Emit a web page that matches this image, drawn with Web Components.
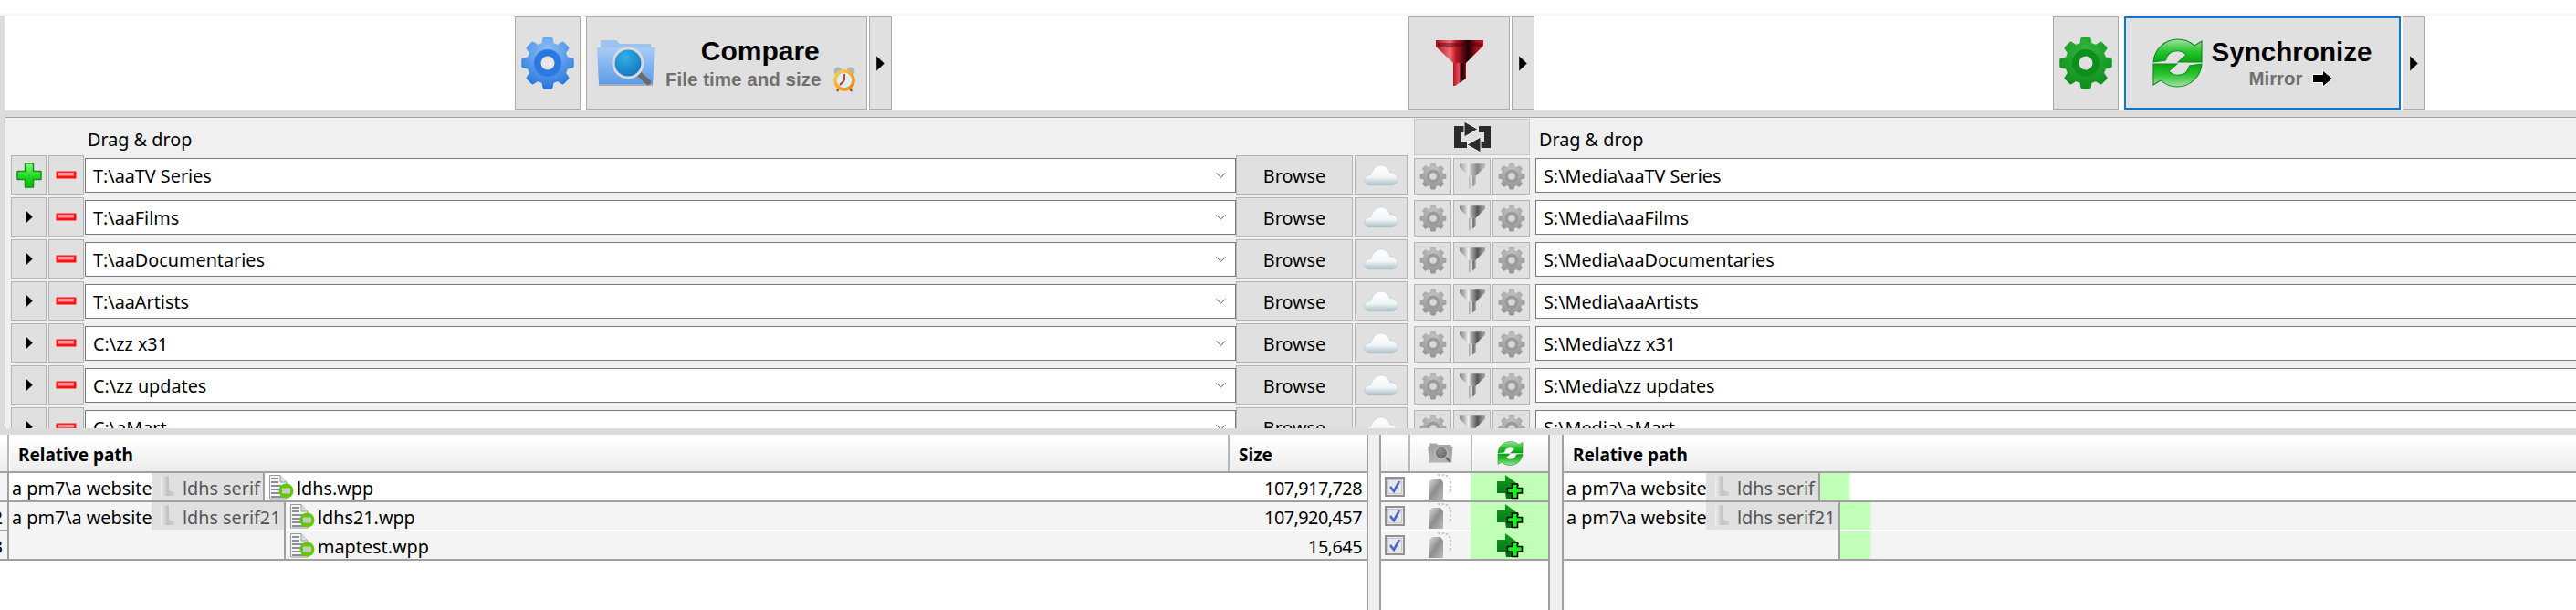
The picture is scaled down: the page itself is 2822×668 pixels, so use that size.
<!DOCTYPE html>
<html lang="en"><head><meta charset="utf-8"><title>FreeFileSync</title>
<style>
html,body{margin:0;padding:0;background:#fff;overflow:hidden}
body{font-family:"Noto Sans",sans-serif;font-size:19.8px;color:#000}
</style></head>
<body>
<ff-app></ff-app>
<script>
function gearPath(c,ro,rr,n){let d='';const t=2*Math.PI/n;for(let i=0;i<n;i++){const a=i*t-Math.PI/2;const p=[[a-t*.29,rr],[a-t*.17,ro],[a+t*.17,ro],[a+t*.29,rr]];p.forEach((q,k)=>{d+=(i==0&&k==0?'M':'L')+(c+q[1]*Math.cos(q[0])).toFixed(2)+' '+(c+q[1]*Math.sin(q[0])).toFixed(2)+' '});}return d+'Z';}
const gear=(a,b,ring,hole)=>`<svg viewBox="0 0 60 60"><defs><radialGradient id="g" cx=".5" cy=".25" r=".85"><stop offset="0" stop-color="${a}"/><stop offset="1" stop-color="${b}"/></radialGradient></defs>
<path d="${gearPath(30,27,21,8)}" fill="url(#g)" stroke="url(#g)" stroke-width="4" stroke-linejoin="round"/><circle cx="30" cy="30" r="15" fill="${ring}"/><circle cx="30" cy="30" r="7.500" fill="${hole}"/></svg>`;
const syncShape='M0 26C1 12 11 1 24 1C31 1 36 4 40 8L47 3V26H24L32 18C29 15 26 13 22 14C16 14 13 19 12 24Z';
const syncIcon=`<svg viewBox="0 0 47 54" preserveAspectRatio="none"><defs><linearGradient id="g" x1="0" y1="0" x2="0" y2="1"><stop offset="0" stop-color="#a5dfa5"/><stop offset=".55" stop-color="#25c52a"/><stop offset="1" stop-color="#0aa514"/></linearGradient></defs>
<path d="${syncShape}" fill="url(#g)" stroke="#0d8a1c" stroke-width="1"/><path d="${syncShape}" fill="url(#g)" stroke="#0d8a1c" stroke-width="1" transform="rotate(180 23.5 27)"/></svg>`;
const folder=(a,b,tab,lensA,lensB,rim,handle)=>`<svg viewBox="0 0 66 54"><defs><linearGradient id="f" x1="0" y1="0" x2="0" y2="1"><stop offset="0" stop-color="${a}"/><stop offset="1" stop-color="${b}"/></linearGradient><radialGradient id="l" cx=".4" cy=".3" r=".8"><stop offset="0" stop-color="${lensA}"/><stop offset="1" stop-color="${lensB}"/></radialGradient></defs>
<path d="M5 2H22L26 6H60V14H5Z" fill="${tab}"/><path d="M1 10H65L62 50H3Z" fill="url(#f)"/><path d="M3 50H62V52H3Z" fill="#7f8a98" opacity=".6"/>
<path d="M44 36L57 48" stroke="${handle}" stroke-width="6" stroke-linecap="round"/><circle cx="35" cy="27" r="16" fill="url(#l)" stroke="${rim}" stroke-width="3"/></svg>`;
const ICONS={
 gearBlue:()=>gear('#8fc2f5','#1f6fdc','#2a79df','#e6e6e6'),
 gearGreen:()=>gear('#33b53d','#0a8a1a','#0d8f1e','#e0e0e0'),
 gearGrey:()=>gear('#c4c4c4','#8e8e8e','#9a9a9a','#d8d8d8'),
 folderBlue:()=>folder('#a8cdf5','#5d9ae8','#9dc2ee','#35aee0','#0d6fc0','#dadada','#6a6a6a'),
 folderGrey:()=>folder('#a2a2a2','#b4b4b4','#a8a8a8','#909090','#626262','#bcbcbc','#666'),
 clock:()=>`<svg viewBox="0 0 24 28"><defs><linearGradient id="o" x1="0" y1="0" x2="1" y2="1"><stop offset="0" stop-color="#ffd24a"/><stop offset="1" stop-color="#e8840c"/></linearGradient></defs><circle cx="5" cy="5" r="4.500" fill="#aeb8bc"/><circle cx="19" cy="5" r="4.500" fill="#aeb8bc"/><path d="M4 27L7 22M20 27L17 22" stroke="#8a5a10" stroke-width="2.400"/><circle cx="12" cy="15" r="10" fill="#d9f0fa" stroke="url(#o)" stroke-width="3.600"/><path d="M12 15L12 8M12 15L7 20" stroke="#d8261c" stroke-width="1.800"/></svg>`,
 funnel:()=>`<svg viewBox="0 0 52 51"><defs><linearGradient id="r" x1="0" y1="0" x2="1" y2="0"><stop offset="0" stop-color="#a8101c"/><stop offset=".3" stop-color="#f0707a"/><stop offset=".42" stop-color="#c01824"/><stop offset=".68" stop-color="#1a0003"/><stop offset=".85" stop-color="#a0101c"/><stop offset="1" stop-color="#c81824"/></linearGradient><linearGradient id="s" x1="0" y1="0" x2="1" y2="0"><stop offset="0" stop-color="#b01420"/><stop offset=".45" stop-color="#e85060"/><stop offset=".6" stop-color="#300005"/><stop offset=".8" stop-color="#300005"/><stop offset="1" stop-color="#b01420"/></linearGradient></defs>
<path d="M0 0H52V6L33 25H19L0 7Z" fill="url(#r)"/><path d="M2 3H50V7H2Z" fill="#40000a" opacity=".45"/><path d="M19 25H33V42L21 50H19Z" fill="url(#s)"/></svg>`,
 funnelGrey:()=>`<svg viewBox="0 0 52 51"><defs><linearGradient id="r" x1="0" y1="0" x2="1" y2="0"><stop offset="0" stop-color="#858585"/><stop offset=".18" stop-color="#b4b4b4"/><stop offset=".34" stop-color="#f0f0f0"/><stop offset=".48" stop-color="#a0a0a0"/><stop offset=".7" stop-color="#555"/><stop offset=".86" stop-color="#8a8a8a"/><stop offset="1" stop-color="#a4a4a4"/></linearGradient><linearGradient id="s" x1="0" y1="0" x2="1" y2="0"><stop offset="0" stop-color="#9a9a9a"/><stop offset=".4" stop-color="#eee"/><stop offset=".6" stop-color="#6a6a6a"/><stop offset="1" stop-color="#a0a0a0"/></linearGradient></defs>
<path d="M0 0H52V6L33 25H19L0 7Z" fill="url(#r)"/><path d="M19 25H33V42L21 50H19Z" fill="url(#s)"/></svg>`,
 tri:()=>`<svg viewBox="0 0 11 19"><path d="M1 1L10 9.500L1 18Z" fill="#000" stroke="#fff" stroke-width=".6" stroke-opacity=".6"/></svg>`,
 mirrorArrow:()=>`<svg viewBox="0 0 24 20"><path d="M1 5.500H12V1L23 10L12 19V14.500H1Z" fill="#000" stroke="#fff" stroke-width="1"/></svg>`,
 plus:()=>`<svg viewBox="0 0 28 28"><defs><linearGradient id="g" x1="0" y1="0" x2="0" y2="1"><stop offset="0" stop-color="#8cf58a"/><stop offset=".55" stop-color="#1fd820"/><stop offset="1" stop-color="#0cb80c"/></linearGradient></defs><path d="M9.500 1H18.500V9.500H27V18.500H18.500V27H9.500V18.500H1V9.500H9.500Z" fill="url(#g)" stroke="#0c9a10" stroke-width="1.500" stroke-linejoin="round"/></svg>`,
 minus:()=>`<svg viewBox="0 0 23 9"><rect x=".5" y=".5" width="22" height="8" fill="#ff1010"/><rect x="3" y="2" width="17" height="3.500" fill="#ff9098"/><rect x="1" y="1" width="21" height="1" fill="#ff2020"/></svg>`,
 cloud:()=>`<svg viewBox="0 0 40 26"><defs><linearGradient id="c" x1="0" y1="0" x2="0" y2="1"><stop offset="0" stop-color="#fff"/><stop offset=".6" stop-color="#f2f6f8"/><stop offset="1" stop-color="#a8bcc2"/></linearGradient></defs><path d="M7 25C2 25 0 21 1 18C2 14 6 13 8 13C10 7 14 2 20 2C26 2 29 6 30 10C36 10 39 14 39 18C39 22 36 25 32 25Z" fill="url(#c)" stroke="#b8c8cc" stroke-width=".6"/></svg>`,
 swap:()=>`<svg viewBox="0 0 40 34"><g fill="none" stroke="#2b2b2b" stroke-width="7"><path d="M14 25.500H3.500V8.500H12"/><path d="M27 8.500H36.500V25.500H28"/></g><path d="M11 0L26 8.500L11 17Z" fill="#2b2b2b" stroke="#f4f4f4" stroke-width="1"/><path d="M29 34L14 25.500L29 17Z" fill="#2b2b2b" stroke="#f4f4f4" stroke-width="1"/></svg>`,
 chev:()=>`<svg viewBox="0 0 11 6"><path d="M.5 .5L5.500 5L10.500 .5" fill="none" stroke="#505050" stroke-width="1"/></svg>`,
 file:()=>`<svg viewBox="0 0 27 27"><path d="M.5 .5H12L19 8V26H.5Z" fill="#f4f4f4" stroke="#9a9a9a"/><path d="M12 .5V8H19" fill="#ddd" stroke="#9a9a9a"/><g stroke="#8a8f98" stroke-width="2"><path d="M2 4H10M2 8H10M2 12H16M2 16H13M2 20H13M2 24H16"/></g><circle cx="18.500" cy="17.500" r="8" fill="#62c800"/><rect x="14" y="14.500" width="9" height="6" fill="#c8c8c8"/></svg>`,
 gfolder:()=>`<svg viewBox="0 0 17 25"><defs><linearGradient id="g" x1="0" y1="0" x2="1" y2="0"><stop offset="0" stop-color="#f0f0f0"/><stop offset=".5" stop-color="#c2c2c2"/><stop offset="1" stop-color="#d0d0d0"/></linearGradient></defs><path d="M2 1L11 0V16L17 18V22H6L2 25Z" fill="url(#g)"/></svg>`,
 docs:()=>`<svg viewBox="0 0 26 28"><defs><linearGradient id="g" x1="0" y1="0" x2="1" y2="1"><stop offset="0" stop-color="#e0e0e0"/><stop offset=".5" stop-color="#8e8e8e"/><stop offset="1" stop-color="#bcbcbc"/></linearGradient></defs><path d="M11 1H20L25 6V20H23" fill="none" stroke="#bcbcbc" stroke-width="1.700" stroke-dasharray="2.500 2"/><path d="M1 9L5 5H14L17 9V28H1Z" fill="url(#g)"/></svg>`,
 createRight:()=>`<svg viewBox="0 0 28 26"><defs><linearGradient id="g" x1="0" y1="0" x2="0" y2="1"><stop offset="0" stop-color="#0ca01e"/><stop offset="1" stop-color="#046a12"/></linearGradient></defs><path d="M0 7H9V0L24 11L16 26H10L9 20H0Z" fill="url(#g)"/><path d="M16.500 10H22.500V14.500H27.500V20H22.500V25.500H16.500V20H11.500V14.500H16.500Z" fill="#18f018" stroke="#000" stroke-width="1.600"/></svg>`,
 check:()=>`<svg viewBox="0 0 22 22"><rect x="1" y="1" width="20" height="20" fill="#e4e6f0" stroke="#929292" stroke-width="2"/><rect x="3.500" y="3.500" width="15" height="15" fill="none" stroke="#c8c8c8" stroke-width="1"/><path d="M6 11L10 16L16 5" fill="none" stroke="#4664b8" stroke-width="2.600"/></svg>`,
 sync:()=>syncIcon
};
class FFIcon extends HTMLElement{
 connectedCallback(){ if(this.shadowRoot) return; const r=this.attachShadow({mode:'open'});
  const w=this.getAttribute('w'),h=this.getAttribute('h');
  r.innerHTML=`<style>:host{display:block;flex:none;width:${w}px;height:${h}px}svg{display:block;width:100%;height:100%;overflow:visible}</style>`+ICONS[this.getAttribute('name')]();}
}
class FFToolButton extends HTMLElement{
 connectedCallback(){ if(this.shadowRoot) return; const r=this.attachShadow({mode:'open'});
  r.innerHTML=`<style>:host{display:flex;flex:none;box-sizing:border-box;height:102px;margin-top:1px;background:#e0e0e0;border:1px solid #ababab;align-items:center;justify-content:center;font-family:"Liberation Sans",sans-serif}
  :host([focused]){border:2px solid #0a78d2}</style><slot></slot>`;}
}
class FFToolbar extends HTMLElement{
 connectedCallback(){ if(this.shadowRoot) return; const r=this.attachShadow({mode:'open'});
  r.innerHTML=`<style>:host{display:flex;height:104px;background:#fff;flex:1}
  .row{display:flex;align-items:flex-start}
  .a{margin-left:559px}.b{margin-left:566px}.c{margin-left:568px}
  .compare{width:308px;justify-content:flex-start;padding:0}
  .t1{font-weight:700;font-size:30px;line-height:34px;text-align:center;color:#000}
  .t2{font-weight:700;font-size:20.600px;line-height:24px;color:#707070;white-space:nowrap}
  .cbody{display:flex;align-items:center;margin-left:10px}
  .col{margin-left:10px;display:flex;flex-direction:column;margin-top:2px}
  .sub{display:flex;align-items:center;gap:13px}
  .sbody{display:flex;align-items:center}
  .t3{font-weight:700;font-size:29.600px;line-height:34px;text-align:center;color:#000;white-space:nowrap}
  .t4{font-weight:700;font-size:20.400px;line-height:24px;color:#707070}
  .ctr{display:flex;justify-content:center;align-items:center;gap:10px}
  </style>
  <div class="row a">
   <ff-tool-button style="width:72px"><ff-icon name="gearBlue" w="60" h="60"></ff-icon></ff-tool-button>
   <ff-tool-button class="compare" style="margin-left:6px"><div class="cbody"><ff-icon name="folderBlue" w="66" h="54"></ff-icon><div class="col"><div class="t1">Compare</div><div class="sub"><span class="t2">File time and size</span><ff-icon name="clock" w="24" h="28"></ff-icon></div></div></div></ff-tool-button>
   <ff-tool-button style="width:25px;margin-left:2px"><ff-icon name="tri" w="11" h="19"></ff-icon></ff-tool-button>
  </div>
  <div class="row b">
   <ff-tool-button style="width:111px"><ff-icon name="funnel" w="52" h="51"></ff-icon></ff-tool-button>
   <ff-tool-button style="width:25px;margin-left:2px"><ff-icon name="tri" w="11" h="19"></ff-icon></ff-tool-button>
  </div>
  <div class="row c">
   <ff-tool-button style="width:72px"><ff-icon name="gearGreen" w="60" h="60"></ff-icon></ff-tool-button>
   <ff-tool-button focused style="width:303px;margin-left:6px"><div class="sbody"><ff-icon name="sync" w="53" h="54"></ff-icon><div style="margin-left:11px"><div class="t3">Synchronize</div><div class="ctr"><span class="t4">Mirror</span><ff-icon name="mirrorArrow" w="25" h="20"></ff-icon></div></div></div></ff-tool-button>
   <ff-tool-button style="width:25px;margin-left:2px"><ff-icon name="tri" w="11" h="19"></ff-icon></ff-tool-button>
  </div>`;}
}
class FFMini extends HTMLElement{
 connectedCallback(){ if(this.shadowRoot) return; const r=this.attachShadow({mode:'open'});
  r.innerHTML=`<style>:host{display:flex;flex:none;box-sizing:border-box;background:#e0e0e0;border:1px solid #b4b4b4;align-items:center;justify-content:center;height:43px}
  :host([low]){height:40px;margin-top:3px}</style><slot></slot>`;}
}
class FFPathBox extends HTMLElement{
 connectedCallback(){ if(this.shadowRoot) return; const r=this.attachShadow({mode:'open'});
  const chev=this.hasAttribute('chev');
  r.innerHTML=`<style>:host{display:flex;flex:none;box-sizing:border-box;height:38px;margin-top:3px;background:#fff;border:1px solid #7a7a7a;align-items:center;padding:0 10px 0 8px;justify-content:space-between;white-space:nowrap}
  </style><span><slot></slot></span>${chev?'<ff-icon name="chev" w="11" h="6"></ff-icon>':''}`;}
}
class FFFolderRow extends HTMLElement{
 connectedCallback(){ if(this.shadowRoot) return; const r=this.attachShadow({mode:'open'});
  const first=this.hasAttribute('first');
  r.innerHTML=`<style>:host{display:flex;height:46px;align-items:flex-start}
  </style>
  <ff-mini style="width:39px">${first?'<ff-icon name="plus" w="28" h="28"></ff-icon>':'<ff-icon name="tri" w="10" h="17"></ff-icon>'}</ff-mini>
  <ff-mini style="width:39px;margin-left:2px"><ff-icon name="minus" w="23" h="9"></ff-icon></ff-mini>
  <ff-path-box chev style="width:1261px;margin-left:1px">${this.getAttribute('left')}</ff-path-box>
  <ff-mini style="width:128px;padding-top:2px">Browse</ff-mini>
  <ff-mini style="width:58px;margin-left:2px"><ff-icon name="cloud" w="38" h="25"></ff-icon></ff-mini>
  <ff-mini low style="width:41px;margin-left:7px"><ff-icon name="gearGrey" w="30" h="30"></ff-icon></ff-mini>
  <ff-mini low style="width:41px;margin-left:2px"><ff-icon name="funnelGrey" w="28" h="28" style="${first?'opacity:.65':''}"></ff-icon></ff-mini>
  <ff-mini low style="width:41px;margin-left:2px"><ff-icon name="gearGrey" w="30" h="30"></ff-icon></ff-mini>
  <ff-path-box style="width:1146px;margin-left:6px">${this.getAttribute('right')}</ff-path-box>`;}
}
class FFFolderPanel extends HTMLElement{
 connectedCallback(){ if(this.shadowRoot) return; const r=this.attachShadow({mode:'open'});
  const L=['T:\\aaTV Series','T:\\aaFilms','T:\\aaDocumentaries','T:\\aaArtists','C:\\zz x31','C:\\zz updates','C:\\aMart'];
  const R=['aaTV Series','aaFilms','aaDocumentaries','aaArtists','zz x31','zz updates','aMart'].map(s=>'S:\\Media\\'+s);
  const rows=L.map((l,i)=>`<ff-folder-row ${i==0?'first':''} left="${l}" right="${R[i]}"></ff-folder-row>`).join('');
  r.innerHTML=`<style>:host{display:block;box-sizing:border-box;flex:1;height:341px;background:#f0f0f0;border-left:1px solid #a4a4a4;border-top:1px solid #a4a4a4;padding-left:6px;overflow:hidden}
  .head{display:flex;height:41px;align-items:center}
  .lbl{margin-left:84px;width:1453px;padding-top:6px}
  .lbl2{margin-left:10px;white-space:nowrap;padding-top:6px}
  .sw{box-sizing:border-box;flex:none;width:127px;height:40px;background:#e0e0e0;display:flex;align-items:center;justify-content:center;margin-top:1px;border:1px solid #c8c8c8}
  </style>
  <div class="head"><span class="lbl">Drag &amp; drop</span><div class="sw"><ff-icon name="swap" w="40" h="34"></ff-icon></div><span class="lbl2">Drag &amp; drop</span></div>
  ${rows}`;}
}
class FFFileGrid extends HTMLElement{
 connectedCallback(){ if(this.shadowRoot) return; const r=this.attachShadow({mode:'open'});
  const side=this.getAttribute('side');
  const css=`<style>:host{display:block;min-width:0;overflow:hidden}
  .hd{display:flex;height:40px;background:linear-gradient(#fff 10%,#ededed);font-weight:700;font-size:19px;align-items:center}
  .hd>div{box-sizing:border-box;height:100%;display:flex;align-items:center}
  .tx{padding-top:4px}
  .sep{border-left:2px solid #b8b8b8;box-shadow:inset 1px 0 #fff}
  .line{height:2px;background:#a0a0a0}
  .alt{background:#f4f4f4}
  .group{display:flex;background:#fff}
  .n{width:8px;box-sizing:border-box;overflow:hidden;display:flex;justify-content:flex-end;padding-right:5px;height:30px;line-height:33px}
  .nn{border-right:2px solid #a0a0a0;flex:none;width:10px;box-sizing:border-box}
  .p{flex:none;box-sizing:border-box;padding-left:3px;border-right:2px solid #a0a0a0}
  .seg{display:flex;height:30px;line-height:33px;white-space:nowrap}
  .pre{flex:none;width:153px}
  .dir{background:#e0e0e0;color:#555;display:flex;align-items:center;flex:1;padding-left:8px;height:30px;box-sizing:border-box}
  .dir span{margin-left:9px;margin-top:3px;line-height:30px;height:30px}
  .rest{flex:1;min-width:0}
  .f{display:flex;height:30px;align-items:center;padding-left:5px;white-space:nowrap;justify-content:space-between;padding-right:5px}
  .f>div{display:flex;align-items:center;gap:3px}
  .f span{line-height:33px;height:30px}
  .f>span{letter-spacing:-.5px}
  .white{height:2px;background:#fff}
  .bar{height:30px;background:linear-gradient(90deg,#c2ffb8 0,#c2ffb8 calc(100% - 3px),transparent)}
  .mid{display:grid;grid-template-columns:30px 68px 85px;height:30px}
  .mid>div{display:flex;align-items:center;justify-content:center;overflow:hidden}
  .ok{background:#c2ffb8}
  </style>`;
  const dir=(t)=>`<div class="dir"><ff-icon name="gfolder" w="17" h="25"></ff-icon><span>${t}</span></div>`;
  const path=(t,w,alt)=>`<div class="p" style="width:${w}px;${alt?'height:62px;background:#f4f4f4':'height:30px;background:#fff'}"><div class="seg"><span class="pre">a pm7\\a website</span>${dir(t)}</div></div>`;
  const nums=(a)=>`<div class="nn" style="background:#f4f4f4">`+a.map((x,i)=>`<div class="n">${x}</div>${i<a.length-1?'<div style="height:2px;width:8px;background:#a0a0a0"></div>':''}`).join('')+`</div>`;
  if(side==='left'){
   const file=(n,s,alt)=>`<div class="f ${alt?'alt':''}"><div><ff-icon name="file" w="27" h="27"></ff-icon><span>${n}</span></div><span>${s}</span></div>`;
   r.innerHTML=css+`<div class="hd"><div style="width:8px"></div><div class="sep tx" style="width:1337px;padding-left:10px">Relative path</div><div class="sep tx" style="flex:1;padding-left:10px">Size</div></div><div class="line"></div>
   <div class="group">${nums([1])}${path('ldhs serif',280)}<div class="rest">${file('ldhs.wpp','107,917,728')}</div></div><div class="line"></div>
   <div class="group">${nums([2,3])}${path('ldhs serif21',303,1)}<div class="rest">${file('ldhs21.wpp','107,920,457',1)}<div class="white"></div>${file('maptest.wpp','15,645',1)}</div></div><div class="line"></div>`;
  } else if(side==='mid'){
   const row=(alt)=>`<div class="mid ${alt?'alt':''}"><div><ff-icon name="check" w="22" h="22"></ff-icon></div><div><ff-icon name="docs" w="26" h="28"></ff-icon></div><div class="ok"><ff-icon name="createRight" w="28" h="26"></ff-icon></div></div>`;
   r.innerHTML=css+`<div class="hd"><div style="width:30px"></div><div class="sep" style="width:68px;justify-content:center"><ff-icon name="folderGrey" w="28" h="24"></ff-icon></div><div class="sep" style="flex:1;justify-content:center"><ff-icon name="sync" w="27" h="27"></ff-icon></div></div><div class="line"></div>
   ${row()}<div class="line"></div>${row(1)}<div class="white" style="background:linear-gradient(90deg,#fff 98px,#c2ffb8 98px)"></div>${row(1)}<div class="line"></div>`;
  } else {
   const barRow=(w,alt)=>`<div class="${alt?'alt':''}" style="height:30px"><div class="bar" style="width:${w}px"></div></div>`;
   r.innerHTML=css+`<div class="hd"><div class="tx" style="padding-left:10px">Relative path</div></div><div class="line"></div>
   <div class="group">${path('ldhs serif',281)}<div class="rest">${barRow(34)}</div></div><div class="line"></div>
   <div class="group">${path('ldhs serif21',303,1)}<div class="rest">${barRow(35,1)}<div class="white"></div>${barRow(35,1)}</div></div><div class="line"></div>`;
  }
 }
}
class FFSash extends HTMLElement{
 connectedCallback(){ if(this.shadowRoot) return; const r=this.attachShadow({mode:'open'});
  r.innerHTML=`<style>:host{display:block;box-sizing:border-box;flex:none;background:#f0f0f0;border-left:2px solid #a0a0a0;border-right:2px solid #a0a0a0}</style>`;}
}
class FFApp extends HTMLElement{
 connectedCallback(){ if(this.shadowRoot) return; const r=this.attachShadow({mode:'open'});
  r.innerHTML=`<style>:host{display:block;width:2822px;height:668px;overflow:hidden;background:#fff}
  .top{height:15px}.hair{height:2px;background:#f3f3f3}
  .tb{display:flex;padding-left:5px;background:#dcdcdc;height:104px}
  .sa{height:7px;background:#dcdcdc}
  .pn{display:flex;padding-left:5px;background:#dcdcdc}
  .gr{display:flex;height:192px}
  </style>
  <div class="top"></div><div class="hair"></div>
  <div class="tb"><ff-toolbar></ff-toolbar></div>
  <div class="sa"></div>
  <div class="pn"><ff-folder-panel></ff-folder-panel></div>
  <div class="sa"></div>
  <div class="gr">
   <ff-file-grid side="left" style="width:1497px;flex:none"></ff-file-grid>
   <ff-sash style="width:16px"></ff-sash>
   <ff-file-grid side="mid" style="width:183px;flex:none"></ff-file-grid>
   <ff-sash style="width:17px"></ff-sash>
   <ff-file-grid side="right" style="flex:1"></ff-file-grid>
  </div>`;}
}
customElements.define('ff-icon',FFIcon);
customElements.define('ff-tool-button',FFToolButton);
customElements.define('ff-toolbar',FFToolbar);
customElements.define('ff-mini',FFMini);
customElements.define('ff-path-box',FFPathBox);
customElements.define('ff-folder-row',FFFolderRow);
customElements.define('ff-folder-panel',FFFolderPanel);
customElements.define('ff-file-grid',FFFileGrid);
customElements.define('ff-sash',FFSash);
customElements.define('ff-app',FFApp);
</script>
</body></html>
